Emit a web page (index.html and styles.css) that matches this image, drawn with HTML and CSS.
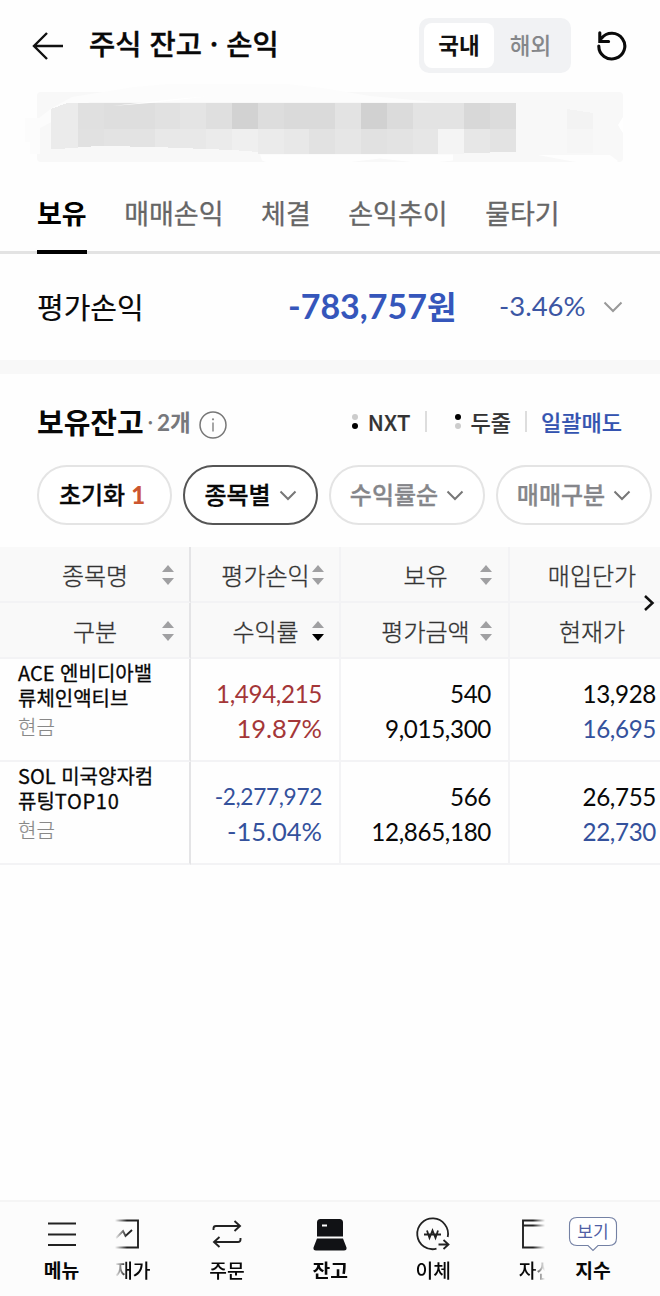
FILE: index.html
```
<!DOCTYPE html>
<html lang="ko">
<head>
<meta charset="utf-8">
<title>주식 잔고 · 손익</title>
<link rel="stylesheet" href="styles.css">
</head>
<body>
<div class="app">
  <header class="top">
    <svg class="back" width="32" height="30" viewBox="0 0 32 30"><path d="M15 2 2 15l13 13M2 15h29" fill="none" stroke="#111" stroke-width="2.4"/></svg>
    <h1 class="title">주식 잔고 · 손익</h1>
    <div class="market"><span class="market-item on">국내</span><span class="market-item">해외</span></div>
    <svg class="reload" width="30" height="30" viewBox="0 0 30 30"><path d="M1.8 15A13 12.8 0 1 0 4.5 7.3M2.8 1.8v8.7h8.8" fill="none" stroke="#0a0a0a" stroke-width="3.1" stroke-linecap="round" stroke-linejoin="miter"/></svg>
  </header>

  <svg class="account" width="660" height="84" viewBox="0 84 660 84">
    <rect x="37" y="92" width="586" height="70" rx="4" fill="#f8f8f8"/>
    <path d="M25 118h14l13-10 20-11 62-10 68-6h60l60 7 48 8 65 6H90L40 128v26H30v-12h-5z" fill="#fcfcfc"/>
    <g id="mosaic" shape-rendering="crispEdges">
      <path fill="#ebebeb" d="M51 109 67 103H78V148L51 149z"/>
      <path fill="#e0e0e0" d="M78 103h26v26H78z"/><path fill="#dedede" d="M104 103h51v26h-51z"/><path fill="#e1e1e1" d="M155 103h25v26h-25z"/><path fill="#e4e4e4" d="M180 103h26v26h-26z"/><path fill="#dfdfdf" d="M206 103h26v26h-26z"/><path fill="#d2d2d2" d="M232 103h26v26h-26z"/><path fill="#dddddd" d="M258 103h26v26h-26z"/><path fill="#dadada" d="M284 103h51v26h-51z"/><path fill="#e3e3e3" d="M335 103h26v26h-26z"/><path fill="#d1d1d1" d="M361 103h26v26h-26z"/><path fill="#dbdbdb" d="M387 103h26v26h-26z"/><path fill="#e3e3e3" d="M413 103h51v26h-51z"/><path fill="#d8d8d8" d="M464 103h26v26h-26z"/><path fill="#dcdcdc" d="M490 103h26v26h-26z"/>
      <path fill="#e1e1e1" d="M78 129h26v17l-26 1z"/><path fill="#e3e3e3" d="M104 129h51v18l-51-1z"/><path fill="#e8e8e8" d="M155 129h51v20l-51-2z"/><path fill="#ebebeb" d="M206 129h26v21l-26-1z"/><path fill="#efefef" d="M232 129h26v23l-26-2z"/><path fill="#ebebeb" d="M258 129h26v25h-26z"/><path fill="#e8e8e8" d="M284 129h25v25h-25z"/><path fill="#e2e2e2" d="M309 129h26v25h-26z"/><path fill="#e6e6e6" d="M335 129h26v25h-26z"/><path fill="#e1e1e1" d="M361 129h26v25h-26z"/><path fill="#e3e3e3" d="M387 129h26v25h-26z"/><path fill="#e6e6e6" d="M413 129h25v25h-25z"/><path fill="#f4f4f4" d="M438 129h26v25h-26z"/><path fill="#e7e7e7" d="M464 129h26v24h-26z"/><path fill="#e3e3e3" d="M490 129h26v23h-26z"/>
      <path fill="#f3f3f3" d="M567 109 593 113V129H567z"/><path fill="#f6f6f6" d="M567 129h26v24h-26z"/>
    </g>
    <path d="M260 154.500h193v6l-28 3-45-5-50 6-48 4-12-5-8-3zM538 155h72l8 6-8 6-40-6z" fill="#fefefe"/>
    <path d="M112 106 175 99 212 96 150 103z" fill="#fff"/>
    <path d="M623 117l-5 8 3 5 2 3z" fill="#fff"/>
  </svg>

  <nav class="tabs"><span class="tab on">보유</span><span class="tab">매매손익</span><span class="tab">체결</span><span class="tab">손익추이</span><span class="tab">물타기</span></nav>

  <section class="summary">
    <span class="sum-label">평가손익</span>
    <span class="sum-value">-783,757<span class="won">원</span></span>
    <span class="sum-rate">-3.46%</span>
    <svg class="sum-chev" width="20" height="12" viewBox="0 0 20 12"><path d="m1.500 1.500 8.500 8.500 8.500-8.500" fill="none" stroke="#999" stroke-width="2"/></svg>
  </section>

  <section class="holdings">
    <div class="hold-head">
      <h2 class="hold-title">보유잔고</h2><span class="hold-dot">·</span><span class="hold-count">2개</span>
      <svg class="info" width="28" height="28" viewBox="0 0 28 28"><circle cx="14" cy="14" r="13" fill="none" stroke="#777" stroke-width="1.500"/><path d="M14 11.500v9" stroke="#888" stroke-width="1.500"/><circle cx="14" cy="8.300" r="1.100" fill="#888"/></svg>
      <div class="tools">
        <span class="dots"><i class="dot"></i><i class="dot dark"></i></span><span class="tool nxt">NXT</span><i class="bar"></i>
        <span class="dots second"><i class="dot dark"></i><i class="dot"></i></span><span class="tool">두줄</span><i class="bar"></i><span class="tool sell">일괄매도</span>
      </div>
    </div>
    <div class="chips">
      <span class="chip reset"><span class="chip-text">초기화</span><b class="num">1</b></span>
      <span class="chip active"><span class="chip-text">종목별</span><svg class="chev" width="18" height="11" viewBox="0 0 18 11"><path d="m1.500 1.500 7.500 7.500 7.500-7.500" fill="none" stroke="#777" stroke-width="2"/></svg></span>
      <span class="chip muted"><span class="chip-text">수익률순</span><svg class="chev" width="18" height="11" viewBox="0 0 18 11"><path d="m1.500 1.500 7.500 7.500 7.500-7.500" fill="none" stroke="#777" stroke-width="2"/></svg></span>
      <span class="chip muted"><span class="chip-text">매매구분</span><svg class="chev" width="18" height="11" viewBox="0 0 18 11"><path d="m1.500 1.500 7.500 7.500 7.500-7.500" fill="none" stroke="#777" stroke-width="2"/></svg></span>
    </div>
  </section>

  <div class="table">
    <div class="row head">
      <div class="cell c1"><span class="h">종목명</span><i class="sort"></i></div><div class="cell c2"><span class="h">평가손익</span><i class="sort"></i></div><div class="cell c3"><span class="h">보유</span><i class="sort"></i></div><div class="cell c4"><span class="h">매입단가</span></div>
    </div>
    <div class="row head">
      <div class="cell c1"><span class="h">구분</span><i class="sort"></i></div><div class="cell c2"><span class="h">수익률</span><i class="sort desc"></i></div><div class="cell c3"><span class="h">평가금액</span><i class="sort"></i></div><div class="cell c4"><span class="h">현재가</span></div>
    </div>
    <svg class="more" width="12" height="18" viewBox="0 0 12 18"><path d="m2 2 7.500 7L2 16" fill="none" stroke="#111" stroke-width="2.500"/></svg>
    <div class="row body">
      <div class="cell name"><span>ACE 엔비디아밸<br>류체인액티브</span><span class="kind">현금</span></div>
      <div class="cell nums up"><span>1,494,215</span><span class="pct">19.87%</span></div>
      <div class="cell nums"><span>540</span><span>9,015,300</span></div>
      <div class="cell nums last"><span>13,928</span><span class="down">16,695</span></div>
    </div>
    <div class="row body">
      <div class="cell name"><span>SOL 미국양자컴<br>퓨팅<span class="latin">TOP10</span></span><span class="kind">현금</span></div>
      <div class="cell nums down"><span class="fit">-2,277,972</span><span class="pct">-15.04%</span></div>
      <div class="cell nums"><span>566</span><span>12,865,180</span></div>
      <div class="cell nums last"><span>26,755</span><span class="down">22,730</span></div>
    </div>
  </div>

  <footer class="bottom">
    <div class="nav-item menu"><svg width="36" height="36" viewBox="0 0 36 36"><path d="M4 7.500h28M4 18.500h28M4 29h28" stroke="#222" stroke-width="2"/></svg><span>메뉴</span></div>
    <div class="scroller"><div class="track">
      <div class="nav-item"><svg width="36" height="36" viewBox="0 0 36 36"><path d="M4 4.500h28v27H4zM10 22l7-7 2.500 5 6.500-6" fill="none" stroke="#222" stroke-width="1.900"/></svg><span>현재가</span></div>
      <div class="nav-item"><svg width="36" height="36" viewBox="0 0 36 36"><path d="M4.500 14v-1.500q0-2.500 2.500-2.500h24M25.500 5l5.500 5-5.500 5M31.500 22v1.500q0 2.500-2.500 2.500H5M10.500 21 5 26l5.500 5" fill="none" stroke="#222" stroke-width="1.900"/></svg><span>주문</span></div>
      <div class="nav-item current"><svg width="36" height="36" viewBox="0 0 36 36"><path d="M8.500 3h19q3.500 0 3.500 3.500v14H5v-14Q5 3 8.500 3zM5 22.500h26l3.500 9q.5 3-2.500 3H4q-3 0-2.500-3z" fill="#111215"/><path d="M10 9.500h5" stroke="#fff" stroke-width="2"/></svg><span>잔고</span></div>
      <div class="nav-item"><svg width="36" height="36" viewBox="0 0 36 36"><path d="M32.700 21A15.400 15.400 0 1 0 21.500 32.700M23.500 28.500h10M28.500 24l5 4.500-5 4.500M9 18.500h17M12 14.500l2.500 7.500 3-7.500 3 7.500 2.500-7.500" fill="none" stroke="#222" stroke-width="1.800"/></svg><span>이체</span></div>
      <div class="nav-item"><svg width="36" height="36" viewBox="0 0 36 36"><path d="M4 4.500h29v27H4zM4 9.500h29" fill="none" stroke="#222" stroke-width="1.900"/></svg><span>자산</span></div>
    </div></div>
    <div class="nav-item index"><div class="bubble"><svg class="bubble-shape" width="50" height="36" viewBox="0 0 50 36"><path d="M9 1.500h32q7.500 0 7.500 7.500v13q0 7.500-7.500 7.500H30l-5 5-5-5H9q-7.500 0-7.500-7.500V9Q1.500 1.500 9 1.500z" fill="#fff" stroke="#7481a4" stroke-width="1.100"/></svg><span class="bubble-text">보기</span></div><span>지수</span></div>
  </footer>
</div>
</body>
</html>
```
FILE: styles.css
```
* { box-sizing: border-box; }
body { margin: 0; background: #fefefe; font-family: "Noto Sans CJK KR", sans-serif; color: #080808; }
.app { width: 660px; height: 1296px; display: flex; flex-direction: column; overflow: hidden; white-space: nowrap; }
h1, h2 { margin: 0; }
svg { flex: none; display: block; }

.top { height: 84px; padding: 7px 33px 0 32px; display: flex; align-items: center; }
.title { margin-left: 25px; padding-bottom: 5px; width: 301px; font-size: 28.500px; font-weight: 500; line-height: 50px; -webkit-text-stroke: .4px; }
.market { margin-left: 29px; width: 152px; height: 55px; padding: 5px; display: flex; background: #f1f2f4; border-radius: 10px; }
.market-item { width: 70px; line-height: 43px; text-align: center; font-size: 22.500px; font-weight: 500; color: #85878a; padding-left: 3px; }
.market-item.on { background: #fff; border-radius: 8px; color: #111; font-weight: 700; padding-left: 0; }
.reload { margin-left: 26px; }
.account { height: 84px; }

.tabs { height: 86px; padding: 24px 37px 0; display: flex; gap: 37.500px; border-bottom: 3px solid #e3e3e3; }
.tab { height: 62px; line-height: 42px; font-size: 27px; font-weight: 400; color: #666; -webkit-text-stroke: .3px; }
.tab.on { color: #000; font-weight: 700; border-bottom: 4px solid #000; -webkit-text-stroke: 0; }

.summary { height: 120px; padding: 0 37px; display: flex; align-items: center; border-bottom: 14px solid #f8f8f8; }
.sum-label { width: 251px; padding-bottom: 3px; font-size: 29px; -webkit-text-stroke: .2px; }
.sum-value { width: 211px; padding-bottom: 2px; font: 700 34px/50px Lato, "Noto Sans CJK KR", sans-serif; color: #3556bb; }
.won { font-size: 32px; }
.sum-rate { width: 104px; padding-bottom: 2px; font: 400 27.500px/50px Lato, sans-serif; color: #3c56a3; }

.holdings { height: 173px; padding: 20px 0 0 37px; }
.hold-head { display: flex; height: 54px; align-items: center; padding-right: 38px; }
.hold-title { width: 110px; font-size: 29px; font-weight: 700; line-height: 54px; }
.hold-dot { width: 10px; font-size: 24px; color: #777; }
.hold-count { width: 42px; padding-top: 3px; font: 700 22.500px/54px Lato, "Noto Sans CJK KR", sans-serif; color: #77787c; }
.info { margin-top: 8px; }
.tools { margin-left: auto; display: flex; align-items: center; }
.dots { display: flex; flex-direction: column; gap: 3px; margin-right: 10px; }
.dots.second { margin-left: 14px; }
.dot { width: 6px; height: 6px; border-radius: 50%; background: #ccc; }
.dot.dark { background: #000; }
.tool { font-size: 22px; font-weight: 500; line-height: 52px; color: #333; padding-bottom: 1px; -webkit-text-stroke: .2px; }
.tool.sell { color: #3453b0; }
.nxt { letter-spacing: .2px; }
.bar { width: 2px; height: 21px; margin: 0 14px; background: #ddd; }
.chips { display: flex; gap: 11px; margin-top: 17px; }
.chip { flex: none; width: 135px; height: 60px; border: 2px solid #e4e4e4; border-radius: 30px; display: flex; align-items: center; justify-content: center; font-size: 24px; font-weight: 500; background: #fff; -webkit-text-stroke: .3px; }
.chip-text { padding-bottom: 4px; }
.chip.reset { padding-right: 5px; }
.chip.active { border-color: #555; }
.chip.muted { width: 156px; color: #85868a; }
.num { font: 900 24px Lato, sans-serif; color: #cc5630; margin-left: 6px; padding-bottom: 1px; -webkit-text-stroke: 0; }
.chev { margin-left: 8px; }

.table { height: 318px; position: relative; }
.row { display: grid; grid-template-columns: 191px 150px 169px 150px; }
.cell { border-right: 2px solid #f3f3f5; border-bottom: 2px solid #f3f3f5; }
.cell:first-child { border-right-color: #e4e4e6; }
.cell:last-child { border-right: 0; }
.head .cell { height: 56px; background: #f9f9f9; display: flex; align-items: center; }
.h { flex: 1; text-align: center; font-size: 24px; font-weight: 300; line-height: 50px; color: #333; -webkit-text-stroke: .35px; }
.sort { flex: none; width: 12px; height: 20px; display: flex; flex-direction: column; justify-content: space-between; }
.sort::before, .sort::after { content: ""; border: 6px solid transparent; border-top: 0; border-bottom: 7px solid #a0a0a2; }
.sort::after { border-bottom: 0; border-top: 7px solid #a0a0a2; }
.sort.desc::after { border-top-color: #000; }
.c1 { padding: 2px 15px 0 28px; }
.c2 { padding: 2px 15px 0 27px; }
.c2 .h { margin-right: -1px; }
.c3 { padding: 2px 16px 0 30px; }
.c4 { padding: 2px 0 0 14px; }
.more { position: absolute; left: 643px; top: 47px; }
.body { height: 103px; }
.name { padding: 1px 0 0 18px; display: flex; flex-direction: column; font-size: 20px; font-weight: 400; line-height: 25px; -webkit-text-stroke: .3px; }
.latin { letter-spacing: .7px; }
.kind { color: #888; font-weight: 300; line-height: 33px; -webkit-text-stroke: .2px; }
.nums { padding: 17px 17px 0 0; text-align: right; display: flex; flex-direction: column; font: 400 24.200px/35px Lato, sans-serif; letter-spacing: -.35px; }
.nums.last { padding-right: 4px; }
.pct { font-size: 25.500px; letter-spacing: 0; }
.fit { font-size: 22.700px; }
.up { color: #a43638; }
.down { color: #34519c; }

.bottom { margin-top: auto; height: 96px; display: flex; background: #fcfcfc; border-top: 2px solid #f5f5f5; }
.nav-item { flex: none; display: flex; flex-direction: column; align-items: center; padding-top: 14px; font-size: 19.300px; font-weight: 500; line-height: 36px; }
.menu { width: 123px; margin-right: -8px; }
.menu, .index, .current { font-weight: 700; }
.scroller { width: 430px; overflow: hidden; -webkit-mask-image: linear-gradient(90deg, transparent, #000 12px, #000 418px, transparent); mask-image: linear-gradient(90deg, transparent, #000 12px, #000 418px, transparent); }
.track { display: flex; margin-left: -42.800px; }
.track .nav-item { width: 103.200px; }
.index { width: 96px; }
.bubble { width: 50px; height: 36px; display: grid; }
.bubble-shape, .bubble-text { grid-area: 1 / 1; }
.bubble-text { text-align: center; font-size: 17px; font-weight: 400; line-height: 29px; color: #5060a5; }
```
